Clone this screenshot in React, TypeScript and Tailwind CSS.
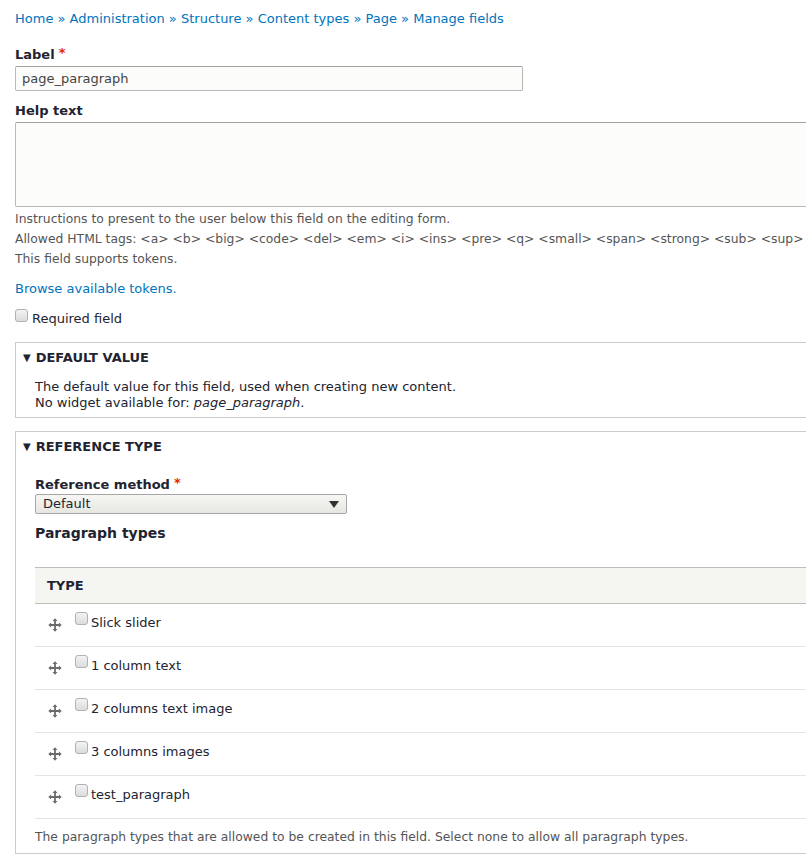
import React from 'react';

const rows = ['Slick slider', '1 column text', '2 columns text image', '3 columns images', 'test_paragraph'];

const DragHandle = () => (
  <svg width="14" height="14" viewBox="0 0 14 14" className="shrink-0" fill="#6b6b6b">
    <path d="M7 0.3 L9.5 3.1 H7.9 V6.1 H10.9 V4.5 L13.7 7 L10.9 9.5 V7.9 H7.9 V10.9 H9.5 L7 13.7 L4.5 10.9 H6.1 V7.9 H3.1 V9.5 L0.3 7 L3.1 4.5 V6.1 H6.1 V3.1 H4.5 Z" />
  </svg>
);

const Checkbox = () => (
  <span className="inline-block w-[13px] h-[13px] shrink-0 rounded-[3px] border border-[#b1b1b1] bg-gradient-to-b from-[#f3f3f3] to-[#dcdcdc]" />
);

const Star = () => <span className="text-[#e32700] ml-1 align-top relative -top-[2px]">*</span>;

const Legend = ({ children }: { children: React.ReactNode }) => (
  <div className="flex items-center h-[30px] pl-[7px] font-bold uppercase text-[#222330]">
    <span className="text-[10px] mr-[5px]">▼</span>
    <span>{children}</span>
  </div>
);

export default function App() {
  return (
    <div className="w-[806px] overflow-hidden bg-white text-[13px] leading-5 text-[#222330]" style={{ fontFamily: '"DejaVu Sans", sans-serif' }}>
      <div className="w-[830px] pl-[15px] pt-[9px] pb-2">
        <nav className="text-[#0074bd]">
          Home » Administration » Structure » Content types » Page » Manage fields
        </nav>

        <div className="mt-[16px]">
          <label className="block font-bold">
            Label<Star />
          </label>
          <div className="mt-[1px] w-[508px] h-[25px] rounded-[2px] border border-[#b8b8b8] border-t-[#a0a0a0] bg-[#fcfcfa] px-[6px] flex items-center text-[#444]">
            page_paragraph
          </div>
        </div>

        <div className="mt-[10px]">
          <label className="block font-bold">Help text</label>
          <div className="mt-[1px] h-[85px] rounded-[2px] border border-[#b8b8b8] border-t-[#a0a0a0] bg-[#fcfcfa]" />
          <div className="mt-[2px] text-[12.35px] text-[#555]">
            <div>Instructions to present to the user below this field on the editing form.</div>
            <div>
              Allowed HTML tags: &lt;a&gt; &lt;b&gt; &lt;big&gt; &lt;code&gt; &lt;del&gt; &lt;em&gt; &lt;i&gt; &lt;ins&gt; &lt;pre&gt; &lt;q&gt; &lt;small&gt; &lt;span&gt; &lt;strong&gt; &lt;sub&gt; &lt;sup&gt;
            </div>
            <div>This field supports tokens.</div>
          </div>
        </div>

        <div className="mt-[10px] text-[#0074bd]">Browse available tokens.</div>

        <div className="mt-[10px] flex items-center gap-[4px]">
          <span className="-mt-[3px]"><Checkbox /></span>
          <span>Required field</span>
        </div>

        <div className="mt-[13px] border border-[#ccc] pb-[6px]">
          <Legend>Default value</Legend>
          <div className="pl-[19px] pt-[6px] leading-4">
            <div>The default value for this field, used when creating new content.</div>
            <div>
              No widget available for: <em>page_paragraph</em>.
            </div>
          </div>
        </div>

        <div className="mt-[13px] border border-[#ccc] pb-[6px]">
          <Legend>Reference type</Legend>
          <div className="pl-[19px] pt-[13px]">
            <label className="block font-bold leading-[19px]">
              Reference method<Star />
            </label>
            <div className="w-[312px] h-[20px] rounded-[2px] border border-[#a6a6a6] bg-gradient-to-b from-[#f6f6f3] to-[#e7e7e2] pl-[7px] pr-[7px] flex items-center justify-between">
              <span>Default</span>
              <svg width="10" height="7" viewBox="0 0 10 7" fill="#333">
                <path d="M0 0 H10 L5 7 Z" />
              </svg>
            </div>
            <div className="mt-[9px] font-bold text-[14px]">Paragraph types</div>

            <div className="mt-[24px]">
              <div className="h-[37px] bg-[#f5f5f2] border-t border-b border-[#bfbfba] flex items-center pl-[12px] font-bold uppercase">
                Type
              </div>
              {rows.map(r => (
                <div key={r} className="h-[43px] border-b border-[#e6e4df] flex items-center pl-[13px]">
                  <DragHandle />
                  <span className="ml-[13px] -mt-[9px]"><Checkbox /></span>
                  <span className="ml-[3px] -mt-[5px]">{r}</span>
                </div>
              ))}
            </div>

            <div className="mt-[8px] text-[12.35px] text-[#555]">
              The paragraph types that are allowed to be created in this field. Select none to allow all paragraph types.
            </div>
          </div>
        </div>
      </div>
    </div>
  );
}
